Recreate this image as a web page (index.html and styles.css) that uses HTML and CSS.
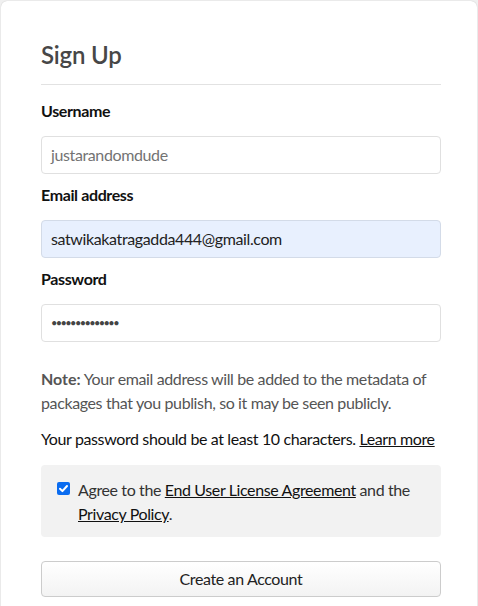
FILE: index.html
```html
<!DOCTYPE html>
<html>
<head>
<meta charset="utf-8">
<link rel="stylesheet" href="styles.css">
</head>
<body>
<div class="card">
  <h2 class="title">Sign Up</h2>
  <form class="form">
    <div class="field">
      <label class="label">Username</label>
      <div class="input input-muted">justarandomdude</div>
    </div>
    <div class="field">
      <label class="label">Email address</label>
      <div class="input input-autofill">satwikakatragadda444@gmail.com</div>
    </div>
    <div class="field">
      <label class="label">Password</label>
      <div class="input input-password">••••••••••••••</div>
    </div>
    <p class="note"><strong class="note-lead">Note:</strong> Your email address will be added to the metadata of packages that you publish, so it may be seen publicly.</p>
    <p class="hint">Your password should be at least 10 characters. <a class="link" href="#">Learn more</a></p>
    <div class="agree">
      <span class="check"><svg width="13" height="13" viewBox="0 0 13 13"><rect x="0" y="0" width="13" height="13" rx="2" fill="#0a6cf0"/><path d="M3 6.8 L5.4 9.1 L10 4" fill="none" stroke="#fff" stroke-width="2" stroke-linecap="round" stroke-linejoin="round"/></svg></span>
      <span class="agree-text">Agree to the <a class="link" href="#">End User License Agreement</a> and the <a class="link" href="#">Privacy Policy</a>.</span>
    </div>
    <div class="button">Create an Account</div>
  </form>
</div>
</body>
</html>
```
FILE: styles.css
```css
html, body {
  margin: 0;
  padding: 0;
}
body {
  background: #f0f0f0;
  font-family: "Source Sans Pro", Lato, "Liberation Sans", sans-serif;
  letter-spacing: -0.38px;
  color: #111;
  height: 606px;
  overflow: hidden;
}
.card {
  box-sizing: border-box;
  margin: 1px 0 0 1px;
  width: 476px;
  min-height: 620px;
  background: #fff;
  border-radius: 6px;
  box-shadow: 0 0 1px 0 rgba(0,0,0,0.25);
  padding: 38px 36px 0 40px;
}
.title {
  margin: 0;
  font-size: 24px;
  font-weight: 600;
  color: #474747;
  line-height: 32px;
  padding-bottom: 13px;
  border-bottom: 1px solid #e2e2e2;
  letter-spacing: -0.2px;
}
.form {
  display: flex;
  flex-direction: column;
  padding-top: 15px;
}
.field {
  display: flex;
  flex-direction: column;
}
.label {
  font-size: 16px;
  font-weight: 700;
  line-height: 22px;
  color: #111;
  margin-bottom: 14px;
}
.input {
  box-sizing: border-box;
  height: 38px;
  border: 1px solid #e0e0e0;
  border-radius: 4px;
  padding: 0 9px;
  font-size: 16px;
  line-height: 36px;
  margin-bottom: 10px;
  color: #222;
}
.input-muted {
  color: #737373;
}
.input-autofill {
  background: #e8f0fe;
  border-color: #d3dbe8;
}
.input-password {
  font-size: 11px;
  letter-spacing: -1.6px;
  color: #444;
}
.note {
  margin: 15px 0 0;
  font-size: 16px;
  line-height: 24px;
  color: #555;
}
.note-lead {
  font-weight: 700;
  letter-spacing: 0;
}
.hint {
  margin: 12px 0 0;
  font-size: 16px;
  line-height: 24px;
  color: #111;
}
.link {
  color: #111;
  text-decoration: underline;
}
.agree {
  display: flex;
  align-items: flex-start;
  gap: 8px;
  margin-top: 14px;
  background: #f2f2f2;
  border-radius: 4px;
  padding: 13px 16px 11px 16px;
}
.check {
  flex: none;
  padding-top: 4px;
  line-height: 0;
}
.agree-text {
  font-size: 16px;
  line-height: 24px;
  color: #333;
}
.button {
  box-sizing: border-box;
  margin-top: 24px;
  height: 36px;
  border: 1px solid #ccc;
  border-radius: 4px;
  background: linear-gradient(#fff, #f3f3f3);
  text-align: center;
  font-size: 16px;
  line-height: 34px;
  color: #222;
}
```
